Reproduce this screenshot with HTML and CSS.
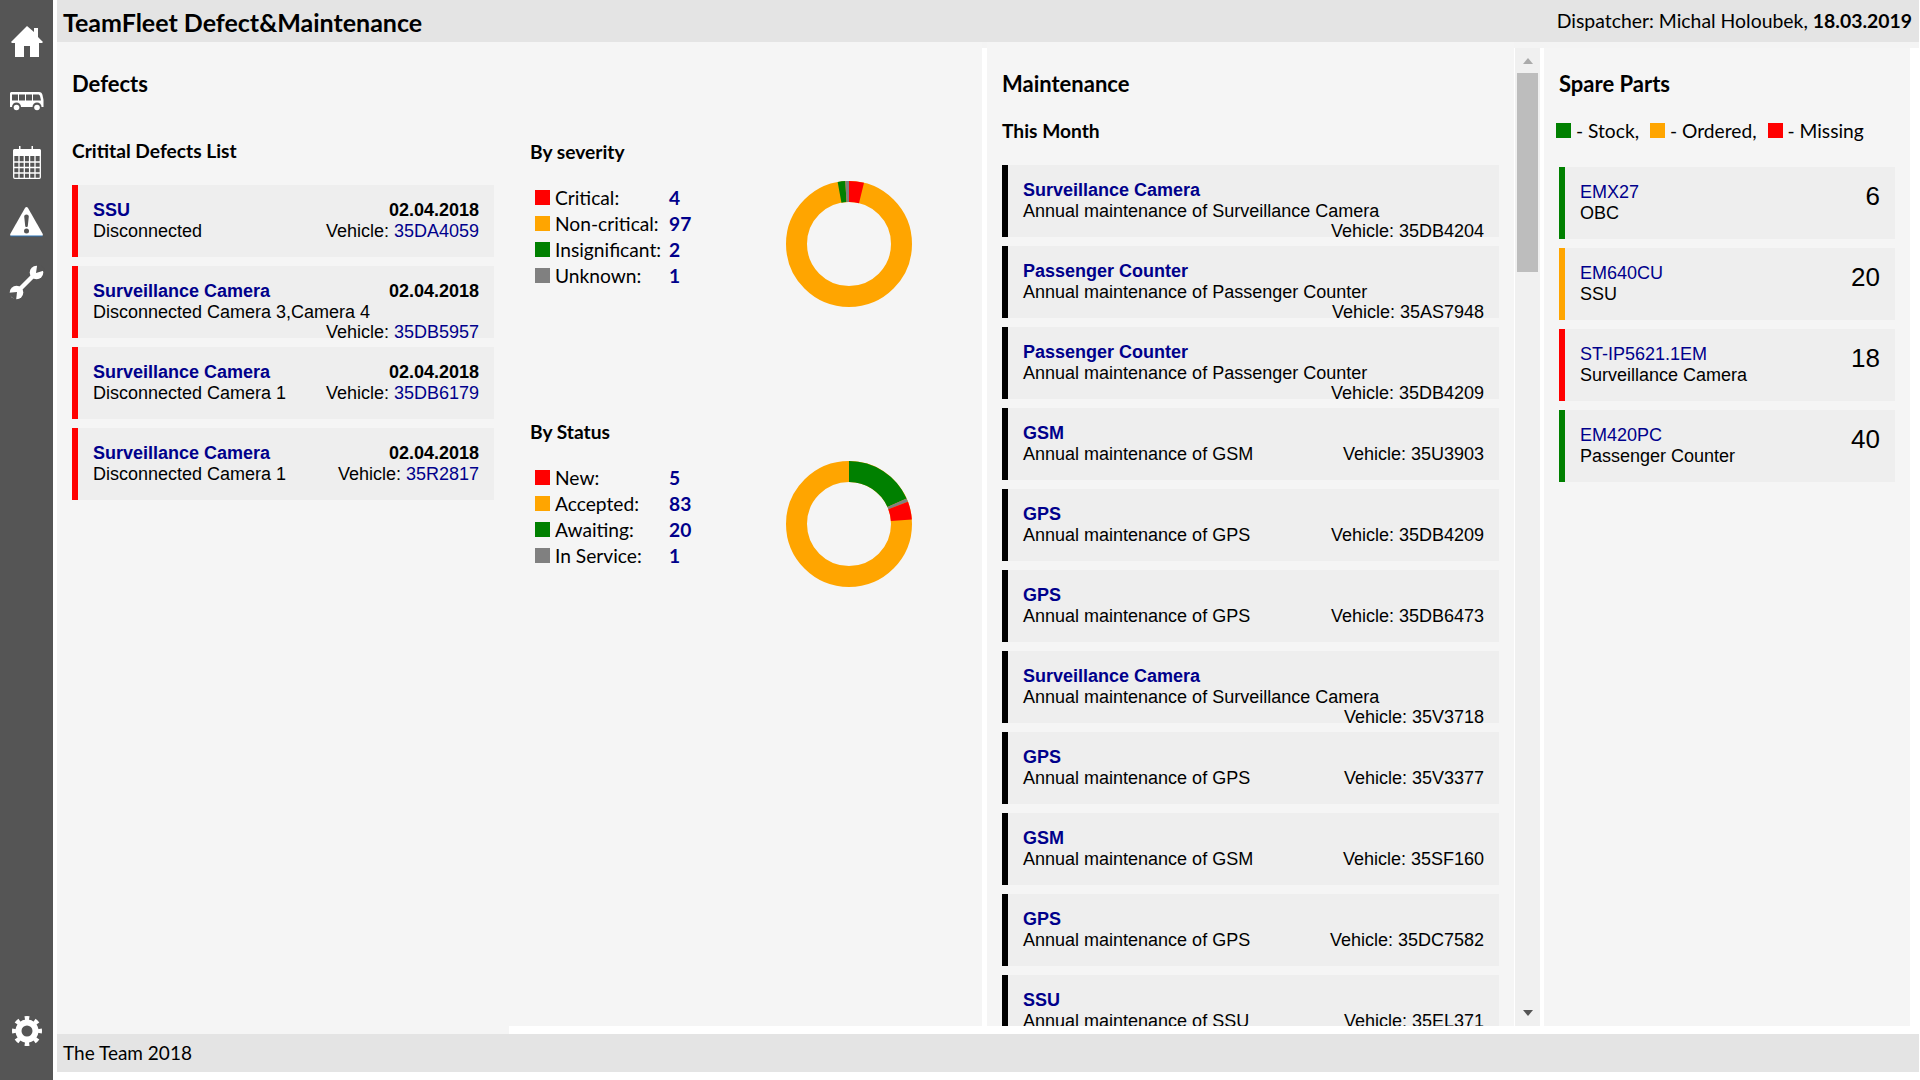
FILE: index.html
```html
<!DOCTYPE html>
<html>
<head>
  <meta charset="UTF-8">
  <title>TeamFleet Defect&amp;Maintenance</title>
  <link rel="stylesheet" href="styles.css">
</head>
<body>
  <nav class="sidebar">
    <a class="nav-icon"><svg width="32" height="32" viewBox="0 0 32 32"><path fill="#fff" d="M16 0L23 6V2h4v9l5 5-1 1h-3v14h-9V20h-6v11H4V17H1l-1-1z"/></svg></a>
    <a class="nav-icon"><svg width="34" height="20" viewBox="0 0 34 20"><path fill="#fff" d="M1 0h28c2 0 3 1 3.500 3l1 5v7H0V1z"/><path fill="#555" d="M2 2.500h6v6H2zM9 2.500h6v6H9zM16 2.500h6v6h-6zM23 2.500h5c1 0 1.500.5 2 1.500l1 4.500h-8z"/><circle cx="6.500" cy="15" r="4.500" fill="#555"/><circle cx="27" cy="15" r="4.500" fill="#555"/><circle cx="6.500" cy="15.500" r="2.800" fill="#fff"/><circle cx="27" cy="15.500" r="2.800" fill="#fff"/></svg></a>
    <a class="nav-icon"><svg width="28" height="33" viewBox="0 0 28 33"><path fill="#fff" d="M1.500 3H6V0h1.500v3h11V0H20v3h6.500C27.300 3 28 3.700 28 4.500V10H0V4.500C0 3.700.7 3 1.500 3z"/><path fill="none" stroke="#fff" stroke-width="1.300" d="M.7 9v22.300c0 .6.4 1 1 1h24.600c.6 0 1-.4 1-1V9M.7 16h26.600M.7 21.500h26.600M.7 27h26.600M6 10v22M11.300 10v22M16.600 10v22M22 10v22"/></svg></a>
    <a class="nav-icon"><svg width="33" height="30" viewBox="0 0 33 30"><path fill="#fff" d="M15 1c.8-1.300 2.200-1.300 3 0l14.500 25.500c.8 1.500.2 2.500-1.500 2.500H2C.3 29-.3 28 .5 26.500z"/><path fill="none" stroke="#2a72b5" stroke-width="1" d="M.5 29h32"/><path fill="#555" d="M14.200 9.500c0-2.800 4.600-2.800 4.600 0l-1 9.500c-.1 1.300-2.500 1.300-2.600 0z"/><circle cx="16.500" cy="24" r="2.500" fill="#555"/></svg></a>
    <a class="nav-icon"><svg width="36" height="36" viewBox="0 0 36 36"><path fill="none" stroke="#fff" stroke-width="4.500" d="M8 28L26 10"/><circle cx="27.500" cy="8.500" r="6.800" fill="#fff"/><path fill="#555" d="M27 9l1.500-10L37 6z"/><circle cx="7.500" cy="28.500" r="6.800" fill="#fff"/><path fill="#555" d="M8 28l-10 1 9 8z"/></svg></a>
    <a class="nav-icon nav-icon-bottom"><svg width="30" height="30" viewBox="0 0 30 30"><circle cx="15" cy="15" r="8.500" fill="none" stroke="#fff" stroke-width="6"/><circle cx="15" cy="15" r="13" fill="none" stroke="#fff" stroke-width="4" pathLength="8" stroke-dasharray="0.450 0.550" stroke-dashoffset="0.225"/></svg></a>
  </nav>

  <div class="page">
    <header class="topbar">
      <h1>TeamFleet Defect&amp;Maintenance</h1>
      <div class="dispatcher">Dispatcher: Michal Holoubek, <b>18.03.2019</b></div>
    </header>

    <div class="panels">
      <section class="panel defects">
        <h2>Defects</h2>
        <div class="defects-body">
          <div class="defects-list">
            <h3>Critital Defects List</h3>
            <div class="cards">
              <div class="card bar-red">
                <div class="card-row"><a class="card-title">SSU</a><b>02.04.2018</b></div>
                <div class="card-row"><span>Disconnected</span><span class="vehicle">Vehicle: <a>35DA4059</a></span></div>
              </div>
              <div class="card bar-red">
                <div class="card-row"><a class="card-title">Surveillance Camera</a><b>02.04.2018</b></div>
                <div class="card-row"><span>Disconnected Camera 3,Camera 4</span><span class="vehicle">Vehicle: <a>35DB5957</a></span></div>
              </div>
              <div class="card bar-red">
                <div class="card-row"><a class="card-title">Surveillance Camera</a><b>02.04.2018</b></div>
                <div class="card-row"><span>Disconnected Camera 1</span><span class="vehicle">Vehicle: <a>35DB6179</a></span></div>
              </div>
              <div class="card bar-red">
                <div class="card-row"><a class="card-title">Surveillance Camera</a><b>02.04.2018</b></div>
                <div class="card-row"><span>Disconnected Camera 1</span><span class="vehicle">Vehicle: <a>35R2817</a></span></div>
              </div>
            </div>
          </div>

          <div class="stats">
            <div class="stat-block">
              <h3>By severity</h3>
              <div class="stat-body">
                <ul class="legend">
                  <li><i class="swatch red"></i><span>Critical:</span><b>4</b></li>
                  <li><i class="swatch orange"></i><span>Non-critical:</span><b>97</b></li>
                  <li><i class="swatch green"></i><span>Insignificant:</span><b>2</b></li>
                  <li><i class="swatch gray"></i><span>Unknown:</span><b>1</b></li>
                </ul>
                <svg class="donut" width="126" height="126" viewBox="0 0 126 126">
                  <g fill="none" stroke-width="21" transform="rotate(-90 63 63)">
                    <circle cx="63" cy="63" r="52.500" pathLength="104" stroke="#ffa500"/>
                    <circle cx="63" cy="63" r="52.500" pathLength="104" stroke="#f00" stroke-dasharray="4 100"/>
                    <circle cx="63" cy="63" r="52.500" pathLength="104" stroke="#008000" stroke-dasharray="2 102" stroke-dashoffset="3"/>
                    <circle cx="63" cy="63" r="52.500" pathLength="104" stroke="#808080" stroke-dasharray="1 103" stroke-dashoffset="1"/>
                  </g>
                </svg>
              </div>
            </div>
            <div class="stat-block">
              <h3>By Status</h3>
              <div class="stat-body">
                <ul class="legend">
                  <li><i class="swatch red"></i><span>New:</span><b>5</b></li>
                  <li><i class="swatch orange"></i><span>Accepted:</span><b>83</b></li>
                  <li><i class="swatch green"></i><span>Awaiting:</span><b>20</b></li>
                  <li><i class="swatch gray"></i><span>In Service:</span><b>1</b></li>
                </ul>
                <svg class="donut" width="126" height="126" viewBox="0 0 126 126">
                  <g fill="none" stroke-width="21" transform="rotate(-90 63 63)">
                    <circle cx="63" cy="63" r="52.500" pathLength="109" stroke="#ffa500"/>
                    <circle cx="63" cy="63" r="52.500" pathLength="109" stroke="#008000" stroke-dasharray="20 89"/>
                    <circle cx="63" cy="63" r="52.500" pathLength="109" stroke="#808080" stroke-dasharray="1 108" stroke-dashoffset="-20"/>
                    <circle cx="63" cy="63" r="52.500" pathLength="109" stroke="#f00" stroke-dasharray="5 104" stroke-dashoffset="-21"/>
                  </g>
                </svg>
              </div>
            </div>
          </div>
        </div>
      </section>

      <section class="panel maintenance">
        <h2>Maintenance</h2>
        <h3>This Month</h3>
        <div class="cards">
          <div class="card bar-black">
            <div class="card-row"><a class="card-title">Surveillance Camera</a></div>
            <div class="card-row"><span>Annual maintenance of Surveillance Camera</span><span class="vehicle">Vehicle: 35DB4204</span></div>
          </div>
          <div class="card bar-black">
            <div class="card-row"><a class="card-title">Passenger Counter</a></div>
            <div class="card-row"><span>Annual maintenance of Passenger Counter</span><span class="vehicle">Vehicle: 35AS7948</span></div>
          </div>
          <div class="card bar-black">
            <div class="card-row"><a class="card-title">Passenger Counter</a></div>
            <div class="card-row"><span>Annual maintenance of Passenger Counter</span><span class="vehicle">Vehicle: 35DB4209</span></div>
          </div>
          <div class="card bar-black">
            <div class="card-row"><a class="card-title">GSM</a></div>
            <div class="card-row"><span>Annual maintenance of GSM</span><span class="vehicle">Vehicle: 35U3903</span></div>
          </div>
          <div class="card bar-black">
            <div class="card-row"><a class="card-title">GPS</a></div>
            <div class="card-row"><span>Annual maintenance of GPS</span><span class="vehicle">Vehicle: 35DB4209</span></div>
          </div>
          <div class="card bar-black">
            <div class="card-row"><a class="card-title">GPS</a></div>
            <div class="card-row"><span>Annual maintenance of GPS</span><span class="vehicle">Vehicle: 35DB6473</span></div>
          </div>
          <div class="card bar-black">
            <div class="card-row"><a class="card-title">Surveillance Camera</a></div>
            <div class="card-row"><span>Annual maintenance of Surveillance Camera</span><span class="vehicle">Vehicle: 35V3718</span></div>
          </div>
          <div class="card bar-black">
            <div class="card-row"><a class="card-title">GPS</a></div>
            <div class="card-row"><span>Annual maintenance of GPS</span><span class="vehicle">Vehicle: 35V3377</span></div>
          </div>
          <div class="card bar-black">
            <div class="card-row"><a class="card-title">GSM</a></div>
            <div class="card-row"><span>Annual maintenance of GSM</span><span class="vehicle">Vehicle: 35SF160</span></div>
          </div>
          <div class="card bar-black">
            <div class="card-row"><a class="card-title">GPS</a></div>
            <div class="card-row"><span>Annual maintenance of GPS</span><span class="vehicle">Vehicle: 35DC7582</span></div>
          </div>
          <div class="card bar-black">
            <div class="card-row"><a class="card-title">SSU</a></div>
            <div class="card-row"><span>Annual maintenance of SSU</span><span class="vehicle">Vehicle: 35EL371</span></div>
          </div>
        </div>
      </section>

      <div class="scrollbar">
        <span class="arrow-up"></span>
        <div class="scroll-track"><div class="scroll-thumb"></div></div>
        <span class="arrow-down"></span>
      </div>

      <section class="panel spare">
        <h2>Spare Parts</h2>
        <div class="spare-legend">
          <i class="swatch green"></i><span>- Stock,</span>
          <i class="swatch orange"></i><span>- Ordered,</span>
          <i class="swatch red"></i><span>- Missing</span>
        </div>
        <div class="cards">
          <div class="card bar-green part">
            <div><a>EMX27</a><div>OBC</div></div><div class="part-count">6</div>
          </div>
          <div class="card bar-orange part">
            <div><a>EM640CU</a><div>SSU</div></div><div class="part-count">20</div>
          </div>
          <div class="card bar-red part">
            <div><a>ST-IP5621.1EM</a><div>Surveillance Camera</div></div><div class="part-count">18</div>
          </div>
          <div class="card bar-green part">
            <div><a>EM420PC</a><div>Passenger Counter</div></div><div class="part-count">40</div>
          </div>
        </div>
      </section>
    </div>

    <div class="panels-tail"></div>
    <footer class="footer">The Team 2018</footer>
  </div>
</body>
</html>
```

FILE: styles.css
```css
* { box-sizing: border-box; }
html, body { margin: 0; height: 100%; }
body { display: flex; height: 1080px; overflow: hidden; background: #fff; color: #000; font-family: "Liberation Sans", Arial, sans-serif; font-size: 18px; line-height: 21px; }
h1, h2, h3, ul { margin: 0; padding: 0; }
a { color: #00008b; }

.sidebar { width: 53px; flex: none; display: flex; flex-direction: column; padding: 12px 0 19px; background: #555; }
.nav-icon { height: 60px; flex: none; display: flex; align-items: center; justify-content: center; }
.nav-icon-bottom { margin-top: auto; }

.page { flex: 1; display: flex; flex-direction: column; margin: 0 1px 0 4px; min-width: 0; }

.topbar { height: 42px; flex: none; display: flex; justify-content: space-between; align-items: center; padding: 0 7px 0 6px; background: #e4e4e4; font-family: Lato, "Open Sans", sans-serif; }
.topbar h1 { font-size: 25px; font-weight: 700; padding-top: 2px; }
.dispatcher { font-size: 19.400px; padding-bottom: 2px; }

.panels { height: 984px; flex: none; display: flex; padding-top: 6px; background: linear-gradient(#f4f4f4 6px, #fff 6px); }
.panel { margin-top: -6px; padding-top: 26px; background: #f5f5f5; overflow: hidden; }
.panel h2 { font-family: Lato, "Open Sans", sans-serif; font-size: 22px; font-weight: 700; line-height: 32px; }
.panel h3 { font-family: Lato, "Open Sans", sans-serif; font-size: 19.200px; font-weight: 700; line-height: 24px; }

.defects { width: 925px; flex: none; padding-left: 15px; }
.defects-body { display: flex; margin-top: 39px; }
.defects-list { width: 422px; flex: none; }
.defects-list .cards { margin-top: 22px; }
.stats { margin-left: 36px; width: 390px; }
.stat-block { height: 280px; padding-top: 1px; }
.stat-body { display: flex; margin-top: 20px; }
.legend { width: 256px; list-style: none; padding-left: 5px; font-family: Lato, "Open Sans", sans-serif; font-size: 19.200px; }
.legend li { display: flex; align-items: center; height: 26px; }
.legend span { width: 114px; margin-left: 5px; white-space: nowrap; }
.legend b { color: #00008b; }
.donut { margin-top: -3px; }

.swatch { display: block; width: 15px; height: 15px; flex: none; }
.red { background: #f00; }
.orange { background: #ffa500; }
.green { background: #008000; }
.gray { background: #808080; }

.cards { display: flex; flex-direction: column; gap: 9px; }
.card { height: 72px; flex: none; padding: 15px 15px 0 15px; border-left: 6px solid; background: #eee; line-height: 20.500px; }
.bar-red { border-left-color: #f00; }
.bar-black { border-left-color: #000; }
.bar-green { border-left-color: #008000; }
.bar-orange { border-left-color: #ffa500; }
.card-row { display: flex; flex-wrap: wrap; justify-content: space-between; }
.card-title { font-weight: 700; }
.vehicle { margin-left: auto; }

.maintenance { width: 527px; flex: none; margin-left: 5px; padding-left: 15px; }
.maintenance h3 { margin-top: 19px; }
.maintenance .cards { margin: 22px 15px 0 0; }

.scrollbar { width: 25px; flex: none; margin-left: 1px; display: flex; flex-direction: column; align-items: center; padding-top: 10px; background: #f0f0f0; }
.arrow-up { border: 5.500px solid transparent; border-top: 0; border-bottom: 6px solid #aaa; }
.arrow-down { border: 5.500px solid transparent; border-bottom: 0; border-top: 6px solid #555; margin-bottom: 10px; }
.scroll-track { flex: 1; width: 21px; padding-top: 9px; }
.scroll-thumb { height: 199px; background: #bdbdbd; }

.spare { width: 366px; flex: none; margin-left: 4px; margin-top: 0; padding-top: 20px; padding-left: 15px; }
.spare-legend { display: flex; align-items: center; height: 24px; margin: 18px 0 0 -3px; font-family: Lato, "Open Sans", sans-serif; font-size: 19.200px; }
.spare-legend span { margin-left: 5px; margin-right: 11px; }
.spare .cards { margin: 25px 15px 0 0; }
.part { display: flex; justify-content: space-between; }
.part-count { font-size: 26px; line-height: 30px; margin-top: -1px; }

.panels-tail { height: 8px; width: 452px; flex: none; background: #f5f5f5; }
.footer { height: 38px; flex: none; padding: 0 7px 0 6px; background: #e4e4e4; font-family: Lato, "Open Sans", sans-serif; font-size: 19px; line-height: 38px; }
```
